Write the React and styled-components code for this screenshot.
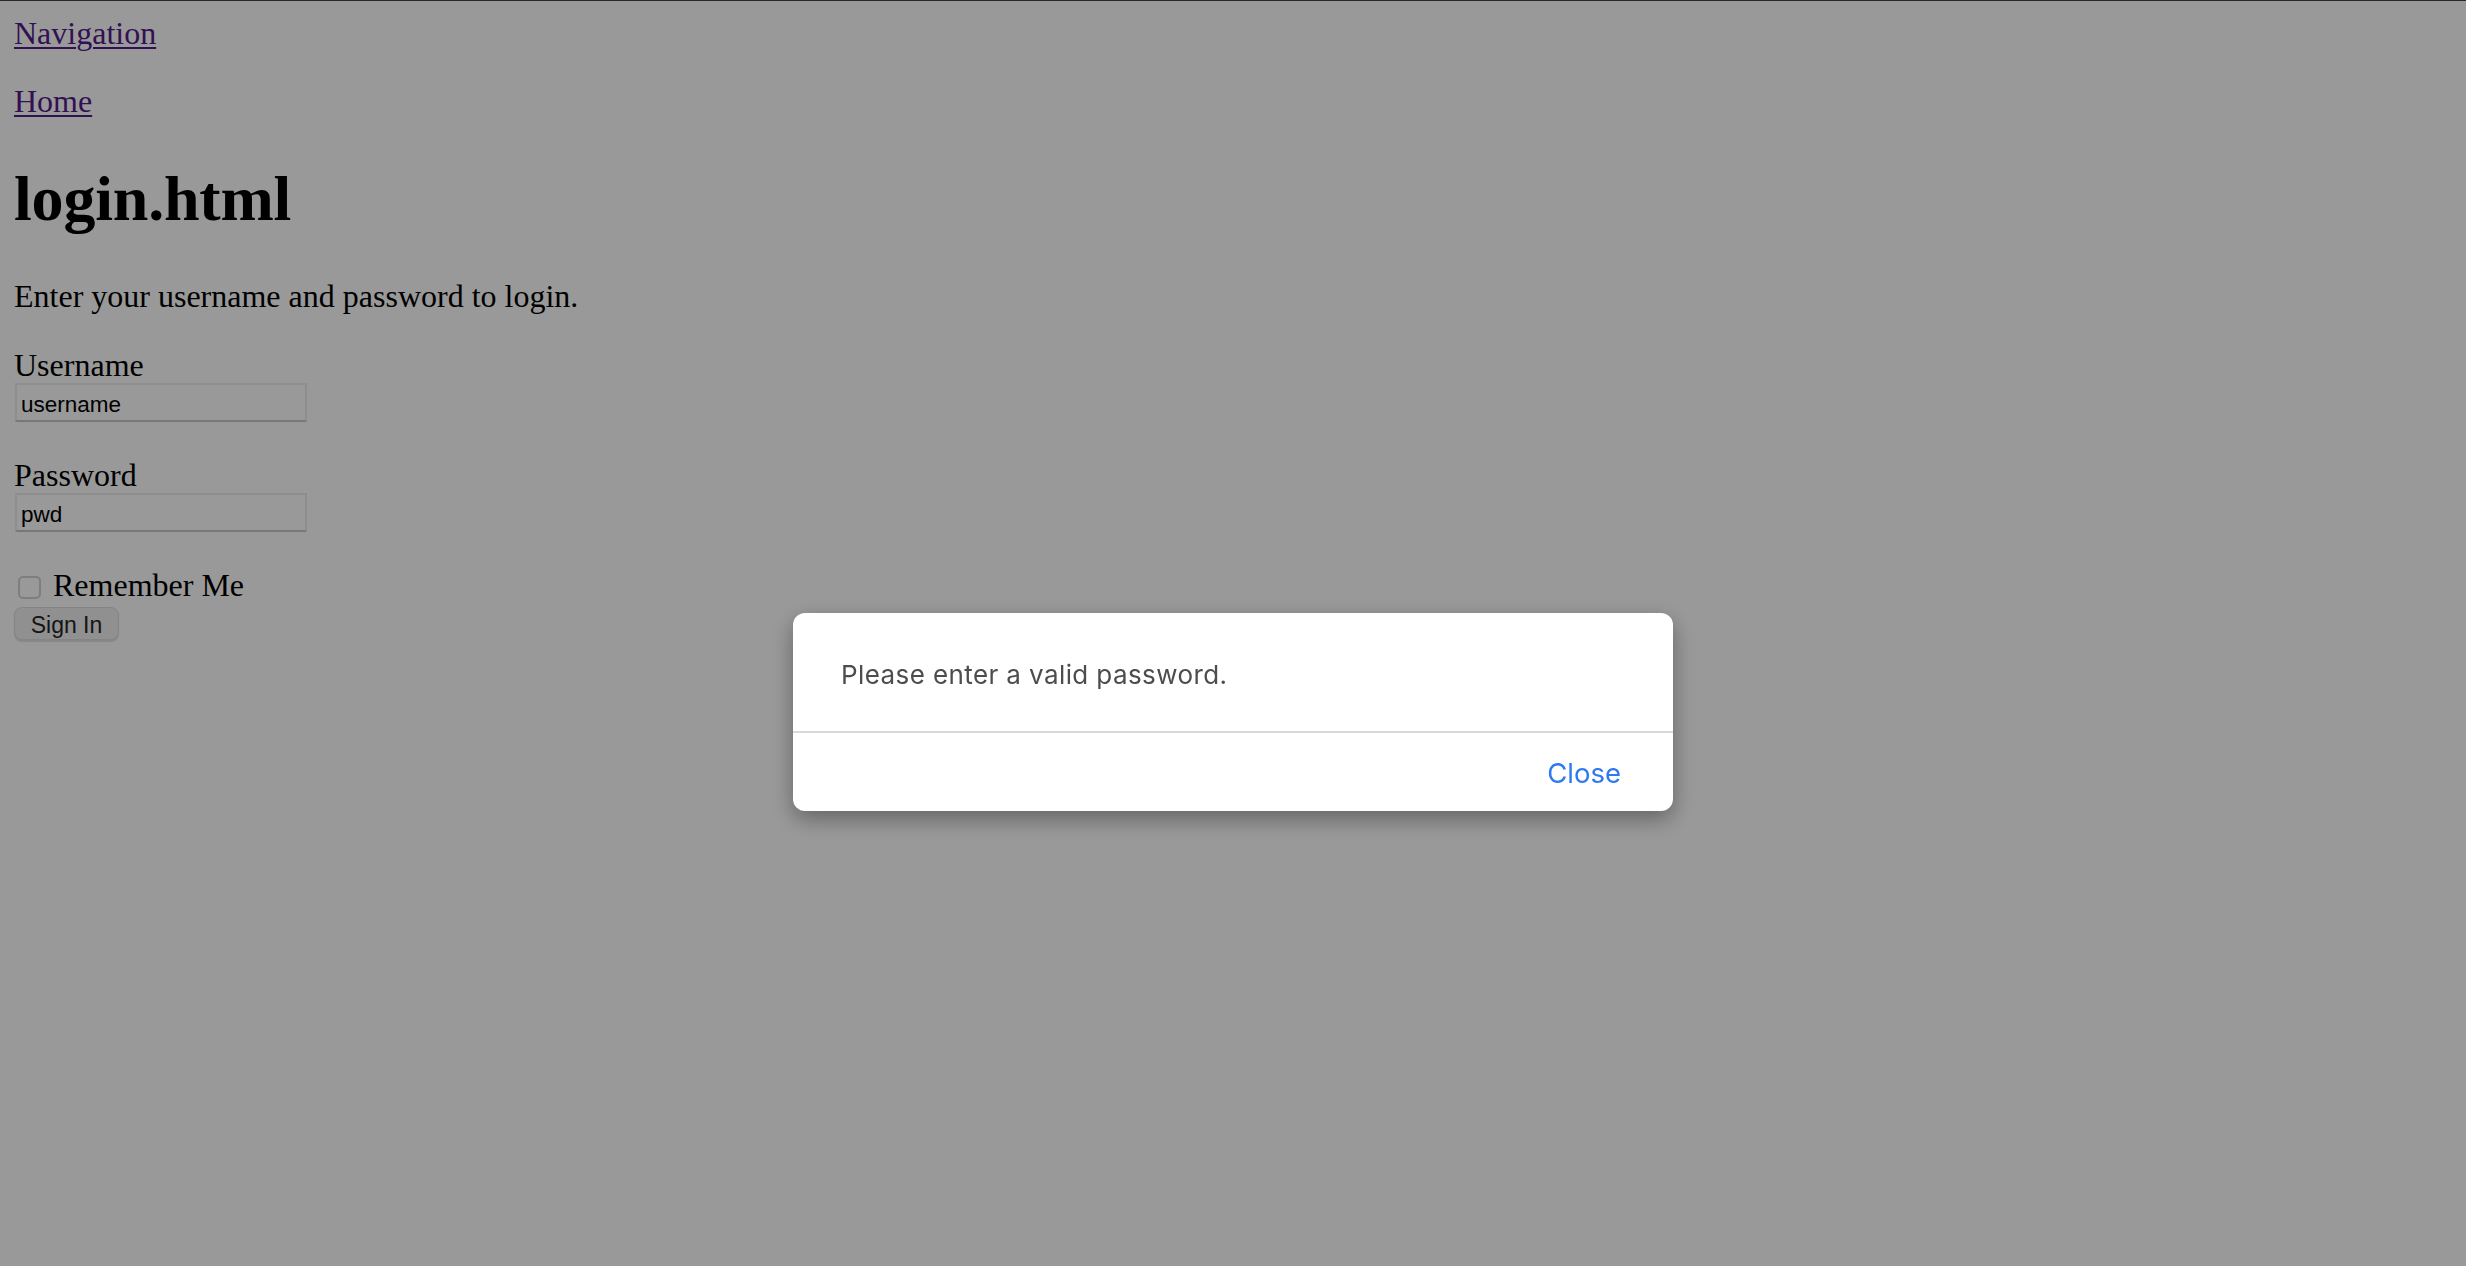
import React from "react";
import styled, { createGlobalStyle } from "styled-components";

const GlobalStyle = createGlobalStyle`
  html, body {
    margin: 0;
    padding: 0;
    background: #ffffff;
  }
  body {
    font-family: "Liberation Serif", "Times New Roman", serif;
    font-size: 32px;
    line-height: 36px;
    color: #000;
  }
  * { box-sizing: border-box; }
`;

const Page = styled.main`
  min-height: 1266px;
  border-top: 1px solid #444;
  padding: 14px 14px 0;
`;

const NavBar = styled.nav`
  display: block;
`;

const Breadcrumb = styled.div`
  margin-top: 32px;
`;

const TextLink = styled.a`
  color: #551a8b;
  text-decoration: underline;
  text-underline-offset: 3px;
  text-decoration-thickness: 2px;
`;

const Title = styled.h1`
  margin: 44px 0 0;
  font-size: 64px;
  line-height: 72px;
  font-weight: 700;
  letter-spacing: -0.2px;
`;

const Intro = styled.p`
  margin: 43px 0 0;
`;

const LoginForm = styled.form`
  display: flex;
  flex-direction: column;
  align-items: flex-start;
`;

const Field = styled.div`
  display: flex;
  flex-direction: column;
  align-items: flex-start;
  margin-top: ${(p) => p.$gap}px;
`;

const FieldLabel = styled.label`
  display: block;
`;

const TextInput = styled.input`
  width: 292px;
  height: 39px;
  margin: 0 0 0 1px;
  padding: 4px 4px 0;
  border: 2px solid #ededed;
  border-bottom-color: #c6c6c6;
  background: #fff;
  font-family: "Liberation Sans", Arial, sans-serif;
  font-size: 22.5px;
  color: #000;
  outline: none;
`;

const RememberRow = styled.div`
  display: flex;
  align-items: flex-start;
  gap: 12px;
  margin-top: 35px;
  padding-left: 4px;
`;

const Checkbox = styled.input`
  appearance: none;
  width: 23px;
  height: 23px;
  margin: 9px 0 0 0;
  border: 2px solid #d2d2d2;
  border-radius: 5px;
  background: #fff;
`;

const SignInButton = styled.button`
  margin-top: 4px;
  width: 105px;
  height: 33px;
  padding: 3px 0 0;
  border: 1.5px solid #dcdcdc;
  border-radius: 8px;
  background: #f0f0f0;
  box-shadow: 0 1.5px 1px rgba(0, 0, 0, 0.12);
  font-family: "Liberation Sans", Arial, sans-serif;
  font-size: 23px;
  color: #262626;
`;

const Overlay = styled.div`
  position: fixed;
  inset: 0;
  background: rgba(0, 0, 0, 0.4);
  display: flex;
  justify-content: center;
  align-items: flex-start;
  padding-top: 613px;
`;

const Dialog = styled.div`
  width: 880px;
  background: #fff;
  border-radius: 12px;
  box-shadow: 0 8px 22px rgba(0, 0, 0, 0.35);
  overflow: hidden;
  font-family: "Inter", "Noto Sans", sans-serif;
`;

const DialogBody = styled.div`
  height: 118px;
  padding: 44px 48px 0;
  font-size: 26px;
  line-height: 36px;
  letter-spacing: 0.4px;
  color: #4d4d4d;
`;

const DialogFooter = styled.div`
  height: 80px;
  border-top: 2px solid #d9d9d9;
  display: flex;
  justify-content: flex-end;
  align-items: center;
  padding: 2px 52px 0;
`;

const CloseButton = styled.button`
  border: none;
  background: none;
  padding: 0;
  font-family: "Inter", "Noto Sans", sans-serif;
  font-size: 27.5px;
  color: #2f78f3;
`;

export default function App() {
  return (
    <>
      <GlobalStyle />
      <Page>
        <NavBar>
          <TextLink href="#">Navigation</TextLink>
        </NavBar>
        <Breadcrumb>
          <TextLink href="#">Home</TextLink>
        </Breadcrumb>
        <Title>login.html</Title>
        <Intro>Enter your username and password to login.</Intro>
        <LoginForm onSubmit={(e) => e.preventDefault()}>
          <Field $gap={33}>
            <FieldLabel htmlFor="username">Username</FieldLabel>
            <TextInput id="username" type="text" defaultValue="username" />
          </Field>
          <Field $gap={35}>
            <FieldLabel htmlFor="password">Password</FieldLabel>
            <TextInput id="password" type="text" defaultValue="pwd" />
          </Field>
          <RememberRow>
            <Checkbox id="remember" type="checkbox" />
            <FieldLabel htmlFor="remember">Remember Me</FieldLabel>
          </RememberRow>
          <SignInButton type="submit">Sign In</SignInButton>
        </LoginForm>
      </Page>
      <Overlay>
        <Dialog role="alertdialog">
          <DialogBody>Please enter a valid password.</DialogBody>
          <DialogFooter>
            <CloseButton type="button">Close</CloseButton>
          </DialogFooter>
        </Dialog>
      </Overlay>
    </>
  );
}
